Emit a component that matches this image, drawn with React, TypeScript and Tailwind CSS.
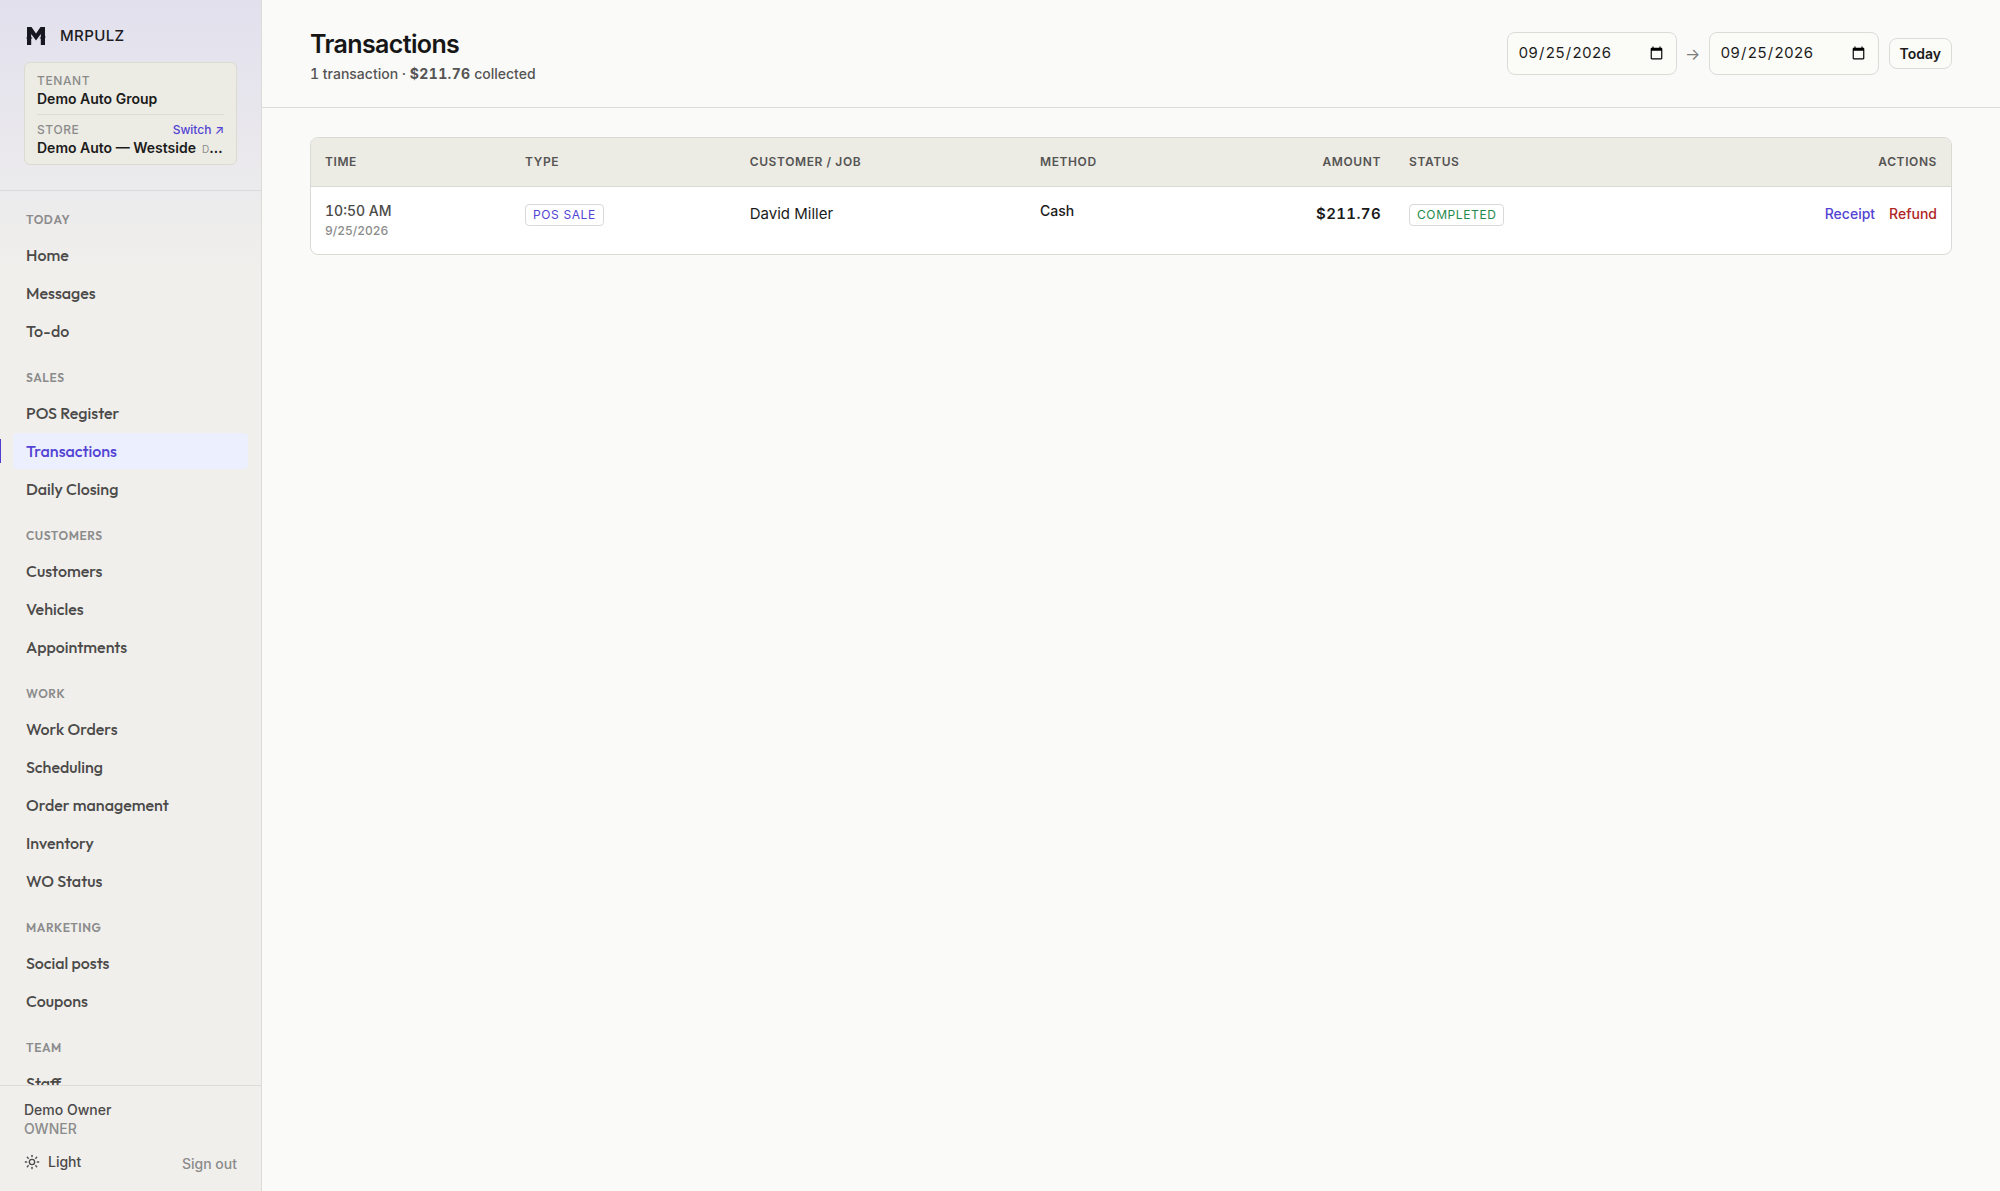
import { Sun } from "lucide-react";

type NavSection = { title: string; items: string[] };

const sections: NavSection[] = [
  { title: "TODAY", items: ["Home", "Messages", "To-do"] },
  { title: "SALES", items: ["POS Register", "Transactions", "Daily Closing"] },
  { title: "CUSTOMERS", items: ["Customers", "Vehicles", "Appointments"] },
  {
    title: "WORK",
    items: ["Work Orders", "Scheduling", "Order management", "Inventory", "WO Status"],
  },
  { title: "MARKETING", items: ["Social posts", "Coupons"] },
  { title: "TEAM", items: ["Staff"] },
];

const active = "Transactions";

function Logo() {
  return (
    <svg viewBox="0 0 20 20" className="size-5 text-[#17171f]" fill="currentColor" aria-hidden="true">
      <path d="M1 1h4.500l4.500 6.500L14.500 1H19v9.500h.6v1H19V19h-4.200v-6.500h-1v-1h1V8L10 14.500 5.200 8v3.500h1v1h-1V19H1v-6.500H.4v-1H1z" />
    </svg>
  );
}

function NavItem({ label }: { label: string }) {
  const isActive = label === active;
  return (
    <li className="relative px-[13px]">
      {isActive && <span className="absolute top-1.5 left-0 h-6 w-px bg-[#4f3fd0]" />}
      <a
        href="#"
        aria-current={isActive ? "page" : undefined}
        className={
          isActive
            ? "flex h-9 items-center rounded-sm bg-[#ebeffe] px-[13px] text-[#5243d3]"
            : "flex h-9 items-center rounded-sm px-[13px] text-[#4b4a49]"
        }
      >
        {label}
      </a>
    </li>
  );
}

function Sidebar() {
  return (
    <aside className="flex w-[262px] shrink-0 flex-col border-r border-[#dcdbd8] bg-[#f0efec] bg-linear-to-b from-[#e2e0ed] to-[#f0efec] to-[270px]">
      <div className="border-b border-[#dcdbdb] px-6 pt-[25px] pb-[25px]">
        <div className="flex items-center gap-3.5 pl-0.5">
          <Logo />
          <span className="text-[15px] leading-[22px] font-medium tracking-wide text-[#1c1c22]">MRPULZ</span>
        </div>
        <div className="mt-[15px] rounded-md border border-[#dcdbd2] bg-[#ecebe4] px-3 pt-[9px] pb-[5px]">
          <div className="text-xs leading-[17px] font-medium tracking-wider text-[#8b8b8b]">TENANT</div>
          <div className="text-sm leading-[19px] font-semibold text-[#1b1b1b]">Demo Auto Group</div>
          <div className="mt-1.5 flex items-center justify-between border-t border-[#dcdbd4] pt-1.5 text-xs leading-[17px] font-medium">
            <span className="tracking-wider text-[#8b8b8b]">STORE</span>
            <a href="#" className="text-[#5243d3]">
              Switch ↗
            </a>
          </div>
          <div className="-mr-1 truncate text-sm leading-[19px] font-semibold text-[#1b1b1b]">
            Demo Auto — Westside<span className="ml-1.5 text-[10px] font-normal text-[#8b8b8b]">DEMO</span>
          </div>
        </div>
      </div>
      <nav className="min-h-0 flex-1 overflow-hidden font-['Outfit','Lato',sans-serif] text-base font-medium">
        {sections.map((s) => (
          <section key={s.title}>
            <h2 className="pt-[17px] pb-[5px] pl-[26px] text-xs leading-6 font-semibold tracking-wider text-[#8b8b8b]">
              {s.title}
            </h2>
            <ul className="flex flex-col gap-0.5">
              {s.items.map((i) => (
                <NavItem key={i} label={i} />
              ))}
            </ul>
          </section>
        ))}
      </nav>
      <footer className="border-t border-[#dcdbd8] px-6 pt-3.5 pb-[15px] text-sm font-medium">
        <div className="leading-5 text-[#4b4a49]">Demo Owner</div>
        <div className="leading-[18px] text-[#8b8b8b]">OWNER</div>
        <div className="mt-3 flex items-start justify-between">
          <button type="button" className="flex items-center gap-2 leading-6 text-[#4b4a49]">
            <Sun className="size-4" strokeWidth={2} />
            Light
          </button>
          <button type="button" className="pt-0.5 leading-6 text-[#8b8b8b]">
            Sign out
          </button>
        </div>
      </footer>
    </aside>
  );
}

function DateField({ label }: { label: string }) {
  return (
    <input
      type="date"
      aria-label={label}
      defaultValue="2026-09-25"
      className="h-[43px] w-[170px] rounded-lg border border-[#dcdbd8] bg-[#fbfbf8] px-2.5 text-[15px] text-[#1b1b1b] tabular-nums"
    />
  );
}

const th = "px-3.5 text-xs font-semibold tracking-wider text-[#555453]";

export default function App() {
  return (
    <div className="flex h-screen bg-[#fafaf8] font-['Inter',sans-serif] text-[#1b1b1b]">
      <Sidebar />
      <main className="min-w-0 flex-1">
        <header className="flex items-start justify-between border-b border-[#dcdbd8] px-12 pt-[27px] pb-[23px]">
          <div>
            <h1 className="text-[25px] leading-[34px] font-semibold tracking-tight text-[#161616]">Transactions</h1>
            <p className="mt-[3px] text-sm leading-5 font-medium text-[#555453] tabular-nums">
              1 transaction · <strong className="font-bold tracking-wide">$211.76</strong> collected
            </p>
          </div>
          <div className="flex items-center gap-2.5 pt-[5px]">
            <DateField label="From date" />
            <span className="flex w-3 justify-center text-base text-[#7d7d7b]">→</span>
            <DateField label="To date" />
            <button
              type="button"
              className="h-[31px] rounded-lg border border-[#dcdbd8] bg-[#fbfbf8] px-2.5 text-sm font-semibold"
            >
              Today
            </button>
          </div>
        </header>
        <div className="px-12 pt-[29px]">
          <div className="overflow-hidden rounded-lg border border-[#d9d9d5] bg-white">
            <table className="w-full table-fixed text-left">
              <colgroup>
                <col className="w-[12.2%]" />
                <col className="w-[13.7%]" />
                <col className="w-[17.7%]" />
                <col className="w-[11.2%]" />
                <col className="w-[11.3%]" />
                <col className="w-[15%]" />
                <col className="w-[18.9%]" />
              </colgroup>
              <thead className="border-b border-[#d9d9d5] bg-[#ecebe4]">
                <tr className="h-12">
                  <th className={th}>TIME</th>
                  <th className={th}>TYPE</th>
                  <th className={th}>CUSTOMER / JOB</th>
                  <th className={th}>METHOD</th>
                  <th className="px-3.5 text-right text-xs font-semibold tracking-wider text-[#555453]">AMOUNT</th>
                  <th className={th}>STATUS</th>
                  <th className="px-3.5 text-right text-xs font-semibold tracking-wider text-[#555453]">ACTIONS</th>
                </tr>
              </thead>
              <tbody>
                <tr className="h-[68px] align-top">
                  <td className="px-3.5 pt-3.5 font-medium tabular-nums">
                    <div className="text-sm leading-5 text-[#4b4a49]">10:50 AM</div>
                    <div className="text-xs leading-5 text-[#8b8b8b]">9/25/2026</div>
                  </td>
                  <td className="px-3.5 pt-[17px]">
                    <span className="block w-fit rounded border border-[#d9d9d5] px-[7px] text-xs leading-5 tracking-wider text-[#5243d3]">
                      POS SALE
                    </span>
                  </td>
                  <td className="px-3.5 pt-[15px] text-[15px] leading-6">David Miller</td>
                  <td className="px-3.5 pt-3.5 text-sm font-medium">Cash</td>
                  <td className="px-3.5 pt-[15px] text-right text-[15px] leading-6 font-semibold tracking-wide tabular-nums">
                    $211.76
                  </td>
                  <td className="px-3.5 pt-[17px]">
                    <span className="block w-fit rounded border border-[#d9d9d5] px-[7px] text-xs leading-5 tracking-wider text-[#1f8a4c]">
                      COMPLETED
                    </span>
                  </td>
                  <td className="px-3.5 pt-[15px]">
                    <div className="flex justify-end gap-3.5 text-sm leading-6 font-medium">
                      <a href="#" className="text-[#5243d3]">
                        Receipt
                      </a>
                      <button type="button" className="text-[#b02525]">
                        Refund
                      </button>
                    </div>
                  </td>
                </tr>
              </tbody>
            </table>
          </div>
        </div>
      </main>
    </div>
  );
}
